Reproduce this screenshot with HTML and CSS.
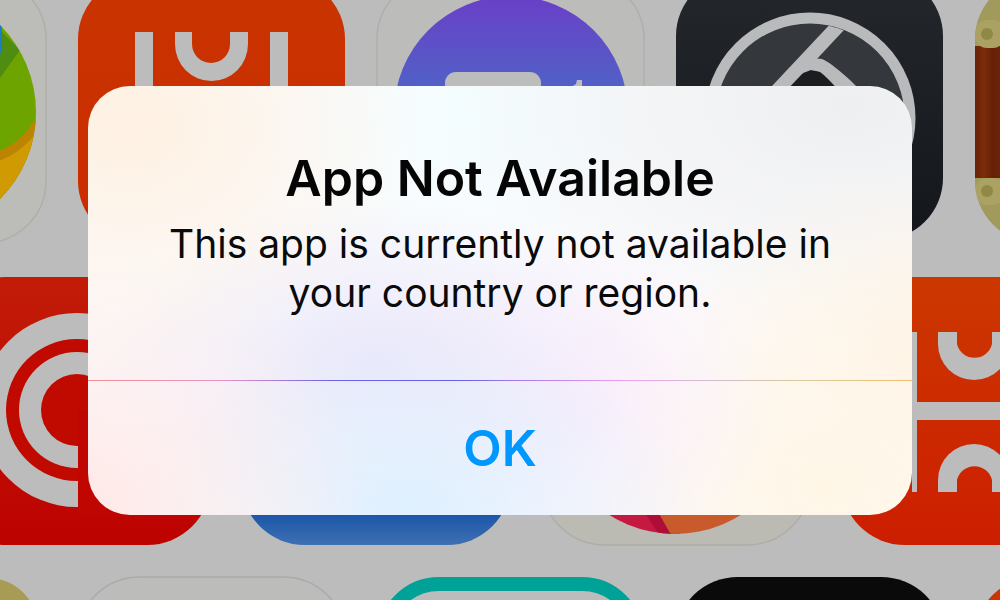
FILE: index.html
```html
<!DOCTYPE html>
<html lang="en">
<head>
<meta charset="utf-8">
<title>App Not Available</title>
<link rel="stylesheet" href="styles.css">
</head>
<body>
<main class="screen">
  <svg class="wallpaper" viewBox="0 0 1000 600" width="1000" height="600" aria-hidden="true">
    <defs>
      <linearGradient id="purple" x1="0" y1="0" x2="0" y2="1"><stop offset="0" stop-color="#6a3fc8"/><stop offset="0.45" stop-color="#4d66c6"/></linearGradient>
      <linearGradient id="dark" x1="0" y1="0" x2="0" y2="1"><stop offset="0" stop-color="#24272b"/><stop offset="1" stop-color="#13171b"/></linearGradient>
      <linearGradient id="mi" x1="0" y1="0" x2="0" y2="1"><stop offset="0" stop-color="#c83500"/><stop offset="1" stop-color="#cc2a00"/></linearGradient>
      <linearGradient id="orange" x1="0" y1="0" x2="0" y2="1"><stop offset="0" stop-color="#cc3800"/><stop offset="1" stop-color="#cc1e00"/></linearGradient>
      <linearGradient id="red" x1="0" y1="0" x2="0" y2="1"><stop offset="0" stop-color="#c21c08"/><stop offset="1" stop-color="#bd0200"/></linearGradient>
      <linearGradient id="blue" x1="0" y1="0" x2="0" y2="1"><stop offset="0.88" stop-color="#1a55a8"/><stop offset="1" stop-color="#3e70b2"/></linearGradient>
      <linearGradient id="wood" x1="0" y1="0" x2="1" y2="0"><stop offset="0" stop-color="#6a2206"/><stop offset="0.3" stop-color="#7c2c0a"/><stop offset="0.6" stop-color="#642006"/><stop offset="1" stop-color="#74280a"/></linearGradient>
      <clipPath id="clip-b"><circle cx="-87" cy="112" r="123"/></clipPath>
      <clipPath id="clip-c"><rect x="975" y="-23" width="267" height="266" rx="62"/></clipPath>
      <clipPath id="clip-d"><circle cx="810" cy="118" r="94"/></clipPath>
      <clipPath id="clip-e"><circle cx="675" cy="410" r="124"/></clipPath>
    </defs>

    <rect width="1000" height="600" fill="#bcbcbc"/>

    <!-- first row -->
    <rect x="-221" y="-23" width="267" height="266" rx="62" fill="#bcbcb8" stroke="#aeaeaa" stroke-width="1.5"/>
    <g clip-path="url(#clip-b)">
      <rect x="-40" y="0" width="80" height="240" fill="#6ea400"/>
      <path d="M-5 25 L20 50 L-5 85Z" fill="#4f8c12"/>
      <rect x="-5" y="25" width="7" height="28" fill="#1b7fc4"/>
      <path d="M-5 152 Q20 146 40 112 L40 240 L-5 240Z" fill="#bd8404"/>
      <path d="M-5 162 Q20 156 40 128 L40 240 L-5 240Z" fill="#cf9a02"/>
    </g>

    <rect x="78" y="-23" width="267" height="266" rx="62" fill="url(#mi)"/>
    <rect x="135" y="32" width="18" height="70" fill="#bcbcbc"/>
    <rect x="270" y="32" width="18" height="70" fill="#bcbcbc"/>
    <path d="M175 32 H192 V44 A19 19 0 0 0 230 44 V32 H248 V44 A36.500 37 0 0 1 175 44Z" fill="#bcbcbc"/>

    <rect x="377" y="-23" width="267" height="266" rx="62" fill="#bcbcba" stroke="#aeaeac" stroke-width="1.5"/>
    <circle cx="511" cy="113" r="117" fill="url(#purple)"/>
    <rect x="445" y="72" width="96" height="60" rx="11" fill="#bcbcbc"/>
    <path d="M566 90 L576 84 L577 80 H582 V90Z" fill="#bcbcbc"/>

    <rect x="676" y="-26" width="267" height="266" rx="62" fill="url(#dark)"/>
    <circle cx="810" cy="118" r="100" fill="#34373b" stroke="#b9babc" stroke-width="11"/>
    <g clip-path="url(#clip-d)">
      <path d="M834 20 L844 30 L786 92 L772 86Z" fill="#b9babc"/>
      <path d="M813 58 L822 59 Q830 62 850 80 L880 110 H840 Q826 72 810 70 L785 92 Z" fill="#b9babc"/>
      <path d="M785 92 L802 74 Q810 68 820 72 Q826 76 840 92 L830 130 H790Z" fill="#1b1d21"/>
    </g>

    <rect x="975" y="-23" width="267" height="266" rx="62" fill="#a09a5c"/>
    <g clip-path="url(#clip-c)">
      <rect x="975" y="46" width="30" height="132" fill="url(#wood)"/>
      <rect x="975" y="20" width="30" height="28" rx="12" fill="#aaa162"/>
      <rect x="975" y="178" width="30" height="27" rx="12" fill="#aaa162"/>
      <circle cx="987" cy="34" r="6" fill="#8f8846"/>
      <circle cx="987" cy="191" r="6" fill="#8f8846"/>
    </g>

    <!-- second row -->
    <rect x="-59" y="277" width="270" height="268" rx="64" fill="url(#red)"/>
    <circle cx="77" cy="410" r="97" fill="#bcbcbc"/>
    <circle cx="77" cy="410" r="71" fill="#c00a00"/>
    <circle cx="77" cy="410" r="58" fill="#bcbcbc"/>
    <circle cx="77" cy="410" r="36" fill="#c00a00"/>
    <rect x="78" y="410" width="30" height="105" fill="#bf0600"/>

    <rect x="241" y="277" width="270" height="268" rx="64" fill="url(#blue)"/>

    <rect x="541" y="277" width="270" height="268" rx="64" fill="#bbbab3" stroke="#aeada6" stroke-width="1.5"/>
    <g clip-path="url(#clip-e)">
      <rect x="550" y="480" width="130" height="70" fill="#c41a42"/>
      <path d="M643 510 H657 L674 536 H660Z" fill="#ae0d38"/>
      <path d="M654 505 H800 V540 H674Z" fill="#c85a2c"/>
    </g>

    <rect x="841" y="277" width="270" height="268" rx="64" fill="url(#orange)"/>
    <rect x="912" y="332" width="5" height="160" fill="#bcbcbc"/>
    <rect x="917" y="402" width="83" height="18" fill="#bcbcbc"/>
    <path d="M938 332 H957 V344 A18 18 0 0 0 992 344 V332 H1010 V344 A36 36 0 0 1 938 344Z" fill="#bcbcbc"/>
    <path d="M938 492 H957 V480 A18 18 0 0 1 992 480 V492 H1010 V480 A36 36 0 0 0 938 480Z" fill="#bcbcbc"/>

    <!-- third row -->
    <circle cx="-12" cy="628" r="50" fill="#a89c54"/>
    <rect x="78" y="577" width="267" height="120" rx="62" fill="#bcbcbb" stroke="#aaaaaa" stroke-width="1.5"/>
    <rect x="384" y="584" width="253" height="120" rx="55" fill="#bcbcbc" stroke="#00a196" stroke-width="14"/>
    <rect x="676" y="577" width="267" height="120" rx="62" fill="#0a0a0a"/>
    <rect x="975" y="577" width="267" height="120" rx="62" fill="#cc3300"/>
  </svg>

  <section class="alert" role="alertdialog" aria-labelledby="alert-title">
    <div class="alert-body">
      <h1 class="alert-title" id="alert-title">App Not Available</h1>
      <p class="alert-message">This app is currently not available in<br>your country or region.</p>
    </div>
    <button class="alert-action" type="button">OK</button>
  </section>
</main>
</body>
</html>
```
FILE: styles.css
```css
* {
  box-sizing: border-box;
}

html,
body {
  margin: 0;
  padding: 0;
}

body {
  width: 1000px;
  height: 600px;
  overflow: hidden;
  background: #bcbcbc;
  font-family: Inter, "Liberation Sans", sans-serif;
}

.screen {
  position: relative;
  width: 1000px;
  height: 600px;
  display: flex;
  align-items: flex-start;
  justify-content: center;
  padding-top: 86px;
  overflow: hidden;
}

.wallpaper {
  position: absolute;
  top: 0;
  left: 0;
  filter: blur(0.7px);
}

.alert {
  position: relative;
  width: 824px;
  height: 429px;
  display: flex;
  flex-direction: column;
  border-radius: 42px;
  overflow: hidden;
  background:
    radial-gradient(300px 240px at 40px 40px, #fff1e2 0%, rgba(255, 241, 226, 0) 100%),
    radial-gradient(280px 260px at 0px 420px, #ffe9e8 0%, rgba(255, 233, 232, 0) 100%),
    radial-gradient(290px 170px at 320px 420px, #dff0ff 0%, rgba(223, 240, 255, 0) 100%),
    radial-gradient(280px 170px at 290px 280px, #e9e7fa 0%, rgba(233, 231, 250, 0) 100%),
    radial-gradient(200px 170px at 490px 320px, #fbeefc 0%, rgba(251, 238, 252, 0) 100%),
    radial-gradient(340px 240px at 740px 400px, #fff6e6 0%, rgba(255, 246, 230, 0) 100%),
    radial-gradient(240px 190px at 840px 260px, #fff4e6 0%, rgba(255, 244, 230, 0) 100%),
    radial-gradient(420px 240px at 760px 20px, #eeeff1 0%, rgba(238, 239, 241, 0) 100%),
    radial-gradient(260px 170px at 380px 30px, #f3fdff 0%, rgba(243, 253, 255, 0) 100%),
    #fbfbfd;
}

.alert-body {
  height: 295px;
  padding-top: 62px;
  text-align: center;
  border-bottom: 1px solid transparent;
  border-image: linear-gradient(90deg, #f39090 0%, #e796c4 16%, #6c62e4 30%, #6660e2 45%, #a878ea 52%, #eba2f0 65%, #cfc0c8 78%, #d8c8a0 85%, #f0c070 100%) 1;
}

.alert-title {
  margin: 0;
  font-size: 50px;
  line-height: 60px;
  font-weight: 600;
  color: #050505;
}

.alert-message {
  margin: 11px 0 0;
  font-size: 39px;
  line-height: 49px;
  font-weight: 400;
  color: #0a0a0a;
}

.alert-action {
  flex: 1;
  padding: 0;
  border: 0;
  background: transparent;
  font-family: inherit;
  font-size: 50px;
  font-weight: 600;
  color: #0098ff;
}
```
